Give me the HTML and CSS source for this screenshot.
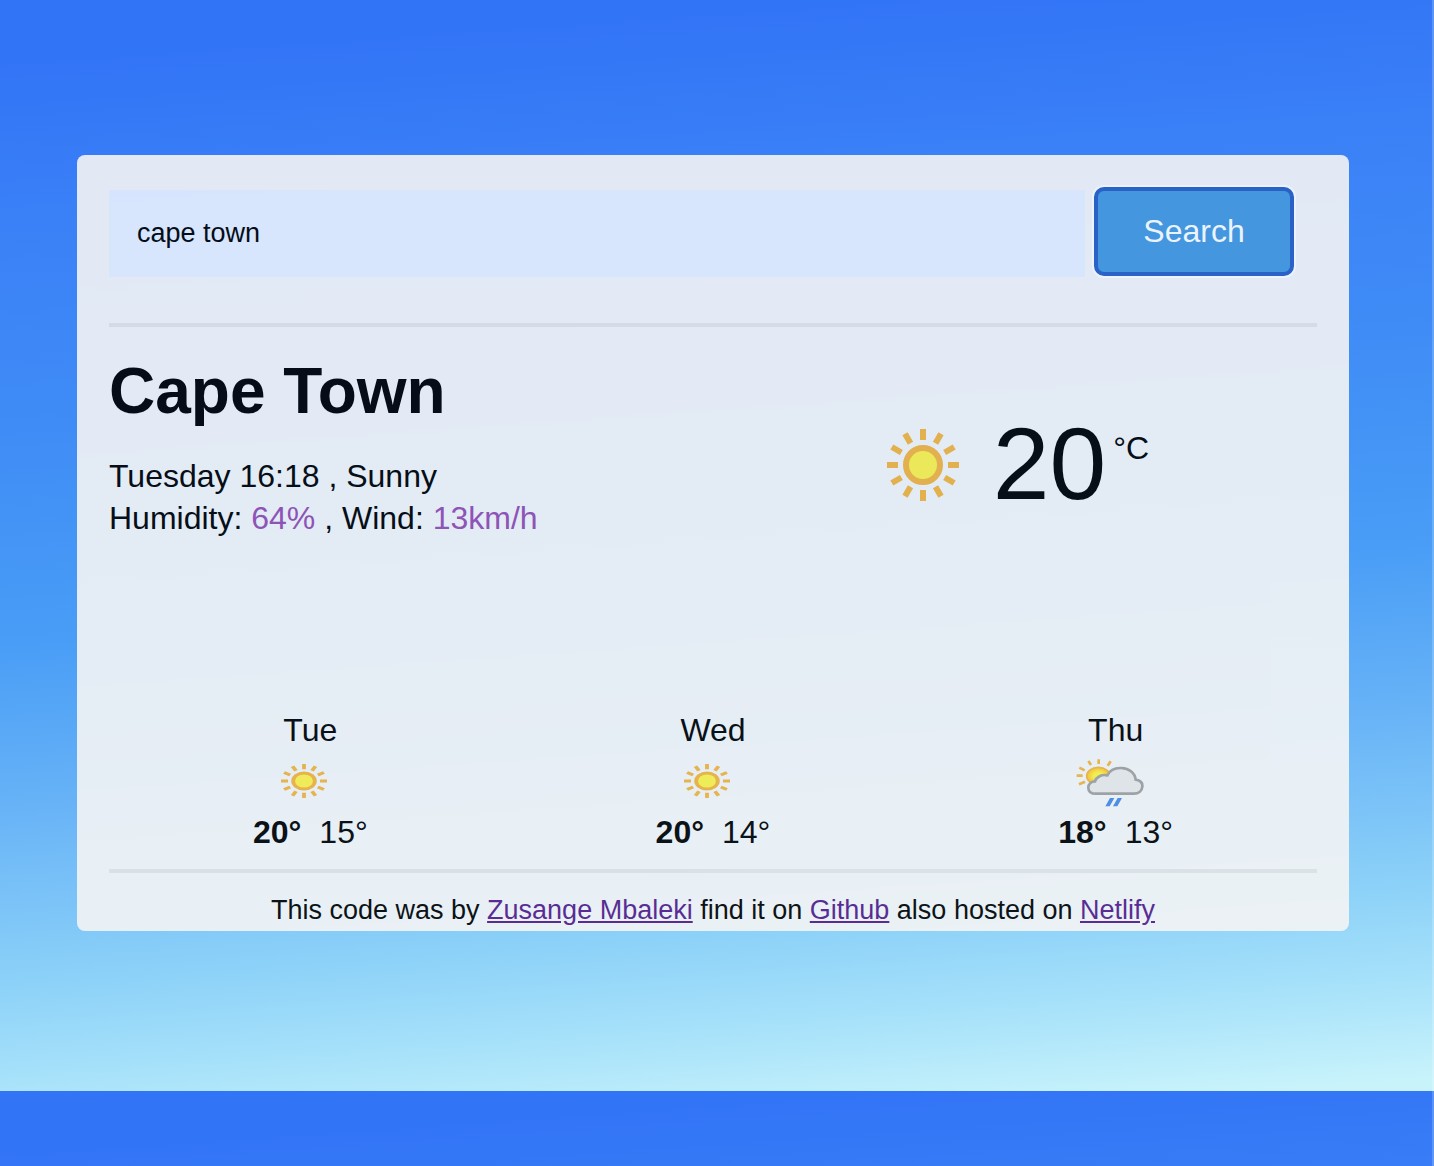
FILE: index.html
```html
<!DOCTYPE html>
<html lang="en">
<head>
<meta charset="utf-8">
<title>Weather</title>
<link rel="stylesheet" href="styles.css">
</head>
<body>
<svg class="defs" aria-hidden="true">
  <symbol id="sun" viewBox="-36 -36 72 72" preserveAspectRatio="none">
    <circle r="17" fill="#fef24a" stroke="#f4b43c" stroke-width="6"/>
    <g stroke="#f4b43c" stroke-width="6">
      <path id="ray" d="M0-36V-25M0 25V36M-36 0H-25M25 0H36"/>
      <use href="#ray" transform="rotate(30)"/>
      <use href="#ray" transform="rotate(60)"/>
    </g>
  </symbol>
</svg>
<main class="card">
  <form class="search">
    <input class="search-input" type="text" aria-label="City" value="cape town">
    <button class="search-button" type="button">Search</button>
  </form>
  <hr class="rule">
  <section class="current">
    <div>
      <h1 class="city">Cape Town</h1>
      <p class="details">Tuesday 16:18 , Sunny<br>Humidity: <span class="accent">64%</span> , Wind: <span class="accent">13km/h</span></p>
    </div>
    <div class="temperature">
      <svg class="current-icon" role="img" aria-label="Sunny"><use href="#sun"/></svg>
      <span class="value">20</span>
      <span class="unit">°C</span>
    </div>
  </section>
  <section class="forecast">
    <div class="day">
      <div>Tue</div>
      <svg class="day-icon" viewBox="0 0 68 50" role="img" aria-label="Sunny"><use href="#sun" x="11" y="7" width="46" height="34"/></svg>
      <div class="range"><strong>20°</strong><span>15°</span></div>
    </div>
    <div class="day">
      <div>Wed</div>
      <svg class="day-icon" viewBox="0 0 68 50" role="img" aria-label="Sunny"><use href="#sun" x="11" y="7" width="46" height="34"/></svg>
      <div class="range"><strong>20°</strong><span>14°</span></div>
    </div>
    <div class="day">
      <div>Thu</div>
      <svg class="day-icon" viewBox="76 171 204 150" role="img" aria-label="Showers">
        <defs>
          <radialGradient id="glow"><stop offset=".4" stop-color="#fff440"/><stop offset="1" stop-color="#ffc02c"/></radialGradient>
        </defs>
        <ellipse cx="143" cy="228" rx="35" ry="26" fill="url(#glow)" stroke="#f4b43c" stroke-width="5"/>
        <path d="M144 178v14M113 183l8 12M180 184l-9 13M86 203l16 8M78 227h18M85 253l18-8" stroke="#f4b43c" stroke-width="8"/>
        <path d="M136 281C120 281 113 273 113 263C113 251 123 244 133 244C137 231 153 222 170 226C178 210 194 203 212 204C236 205 253 219 255 239C269 241 276 249 275 260C274 273 264 281 250 281Z" fill="#ebe9e8" stroke="#a2a09e" stroke-width="8"/>
        <path d="M164 319L178 294H191L177 319ZM187 319L201 294H214L200 319Z" fill="#4a8ae2"/>
      </svg>
      <div class="range"><strong>18°</strong><span>13°</span></div>
    </div>
  </section>
  <hr class="rule">
  <footer class="credits">This code was by <a href="#">Zusange Mbaleki</a> find it on <a href="#">Github</a> also hosted on <a href="#">Netlify</a></footer>
</main>
</body>
</html>
```
FILE: styles.css
```css
* { box-sizing: border-box; }

html {
  background:
    linear-gradient(to left, rgba(255, 255, 255, .2) 2px, transparent 2px),
    linear-gradient(176deg, #c8f3fb 0, #c8f3fb 0, #3274f6 0, #3274f6 5%, #3a80f7 18%, #3f8cf6 36%, #499df6 54%, #68b3f7 68%, #8ad0f8 82%, #a8e2fa 91%, #c8f3fb 99%);
}

body {
  margin: 0;
  padding: 155px 85px 160px 77px;
  font-family: "Liberation Sans", Arial, sans-serif;
  font-size: 32px;
  line-height: 42px;
  color: #000;
}

.defs { position: absolute; width: 0; height: 0; }

.card {
  padding: 32px 32px 0;
  border-radius: 8px;
  background: #f5f5f5;
  opacity: .9;
}

.search {
  display: flex;
  gap: 9px;
  padding-right: 23px;
}

.search-input {
  flex: 1;
  min-width: 0;
  height: 87px;
  margin-top: 3px;
  padding: 0 28px;
  border: 0;
  background: #e8f0fe;
  font: 27px "Liberation Sans", Arial, sans-serif;
  color: #000;
}

.search-button {
  width: 200px;
  height: 89px;
  padding: 0;
  border: 4px solid #285ec2;
  border-radius: 10px;
  background: #4599dc;
  box-shadow: 0 0 0 2px #fff;
  font: 32px "Liberation Sans", Arial, sans-serif;
  color: #fff;
}

.rule {
  height: 4px;
  margin: 0;
  border: 0;
  background: #e5e5e5;
}

.search + .rule { margin-top: 46px; }

.current {
  display: grid;
  grid-template-columns: 1fr 1fr;
  padding-top: 27px;
}

.city {
  margin: 0 0 27px;
  font-size: 64px;
  line-height: 74px;
}

.details { margin: 0; }

.accent { color: #964db0; }

.temperature {
  display: flex;
  justify-content: center;
  align-items: flex-start;
  padding: 55px 0 0 6px;
}

.current-icon {
  width: 72px;
  height: 72px;
  margin: 20px 34px 0 0;
}

.value {
  margin-right: 7px;
  font-size: 102px;
  line-height: 110px;
}

.unit { margin-top: 18px; }

.forecast {
  display: grid;
  grid-template-columns: repeat(3, 1fr);
  padding: 170px 0 16px;
}

.day {
  display: flex;
  flex-direction: column;
  align-items: center;
}

.day-icon {
  width: 68px;
  height: 50px;
  margin: 6px 12px 4px 0;
}

.range { display: flex; gap: 18px; }

.credits {
  padding: 18px 0 2px;
  font-size: 27px;
  line-height: 38px;
  text-align: center;
}

.credits a { color: #551a8b; }
```
